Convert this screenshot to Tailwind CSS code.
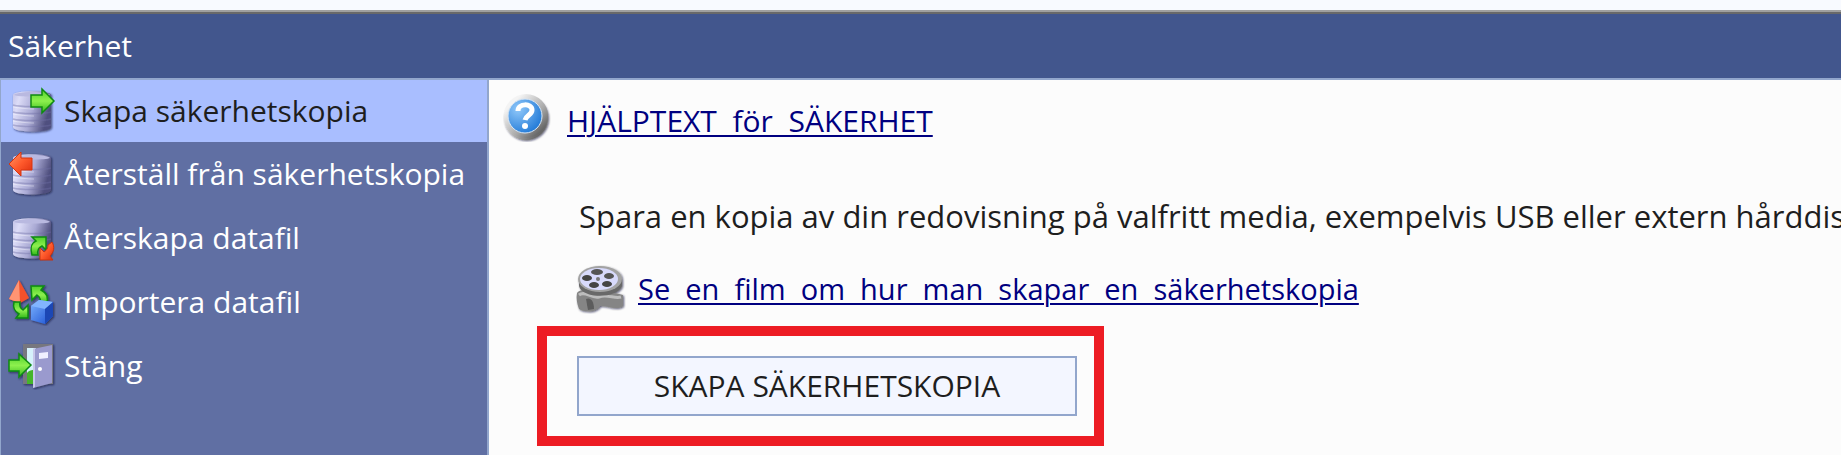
<!DOCTYPE html>
<html lang="sv">
<head>
  <meta charset="UTF-8" />
  <meta name="viewport" content="width=device-width, initial-scale=1.0"/>
  <title>Säkerhet</title>
  <script src="https://cdn.jsdelivr.net/npm/@tailwindcss/browser@4"></script>
</head>
<body class="min-h-screen flex flex-col overflow-x-hidden bg-[#fcfcfc] font-['Open_Sans','Noto_Sans',sans-serif] text-[30px] leading-10 text-[#1e1e1e]">

  <!-- shared gradients and shapes -->
  <svg class="absolute size-0" aria-hidden="true">
    <defs>
      <linearGradient id="metal" x1="0" x2="1" y1="0" y2="0.3">
        <stop offset="0" stop-color="#c4c4e8"/>
        <stop offset="0.2" stop-color="#dcdcf7"/>
        <stop offset="0.6" stop-color="#a9a9d4"/>
        <stop offset="1" stop-color="#50507f"/>
      </linearGradient>
      <linearGradient id="green" x1="0" x2="0" y1="0" y2="1">
        <stop offset="0" stop-color="#4fd02a"/>
        <stop offset="0.5" stop-color="#8df04e"/>
        <stop offset="1" stop-color="#35b91c"/>
      </linearGradient>
      <linearGradient id="red" x1="0" x2="1" y1="0" y2="1">
        <stop offset="0" stop-color="#ff9a6a"/>
        <stop offset="0.5" stop-color="#ff5a2c"/>
        <stop offset="1" stop-color="#d92a0c"/>
      </linearGradient>
      <linearGradient id="blue" x1="0" x2="1" y1="0" y2="1">
        <stop offset="0" stop-color="#7db4ff"/>
        <stop offset="1" stop-color="#1a4fd0"/>
      </linearGradient>
      <linearGradient id="steel" x1="0" x2="1" y1="0" y2="1">
        <stop offset="0.2" stop-color="#f4f4f4"/>
        <stop offset="0.6" stop-color="#a8a8a8"/>
        <stop offset="1" stop-color="#3c3c3c"/>
      </linearGradient>
      <radialGradient id="glass" cx="0.3" cy="0.3" r="0.8">
        <stop offset="0" stop-color="#90c8fa"/>
        <stop offset="1" stop-color="#1f78d6"/>
      </radialGradient>
      <filter id="shadow" x="-20%" y="-20%" width="150%" height="150%">
        <feDropShadow dx="1" dy="1" stdDeviation="1" flood-color="#101030" flood-opacity="0.7"/>
      </filter>
      <g id="db">
        <path d="M5 8 C5 3 43 3 43 8 V40 C43 46 5 46 5 40 Z" fill="url(#metal)" filter="url(#shadow)"/>
        <path d="M6 8 C9 4 39 4 42 8 C39 10 9 10 6 8 Z" fill="#b9b9e0"/>
        <path d="M5 18 C12 20 36 20 43 18 M5 25 C12 27 36 27 43 25 M5 32 C12 34 36 34 43 32 M5 38 C12 40 36 40 43 38" fill="none" stroke="#6f6fa4" stroke-opacity="0.4" stroke-width="1.5"/>
        <path d="M5 20 C10 21 20 22 26 22 M5 27 C10 28 20 29 26 29 M5 34 C10 35 20 36 26 36" fill="none" stroke="#fff" stroke-opacity="0.4"/>
      </g>
    </defs>
  </svg>

  <div class="h-3 bg-[#f8faff] border-b-2 border-[#a0a0a0]"></div>
  <header class="border-t-2 border-t-[#696969] border-b-2 border-b-[#92a6cc] bg-[#42568d] px-2 py-3 text-white">
    <h1>Säkerhet</h1>
  </header>

  <div class="flex grow">
    <nav class="w-[489px] shrink-0 border-l border-r-2 border-[#92a6cc] bg-[#606fa3] text-white">
      <a href="#" class="flex h-[62px] items-center gap-2 bg-[#a9beff] pl-[7px] text-[#1e1e1e]">
        <svg class="size-12" viewBox="0 0 48 48">
          <use href="#db"/>
          <path d="M23 8 H34 V2 L46 14 L34 26 V20 H23 Z" fill="url(#green)" stroke="#0f8a12" stroke-width="1.5"/>
        </svg>
        Skapa säkerhetskopia
      </a>
      <a href="#" class="flex h-16 items-center gap-2 pl-[7px]">
        <svg class="size-12" viewBox="0 0 48 48">
          <use href="#db"/>
          <path d="M24 8 H13 V2 L1 14 L13 26 V20 H24 Z" fill="url(#red)" stroke="#d8340f" stroke-width="1"/>
        </svg>
        Återställ från säkerhetskopia
      </a>
      <a href="#" class="flex h-16 items-center gap-2 pl-[7px]">
        <svg class="size-12" viewBox="0 0 48 48">
          <use href="#db"/>
          <path d="M24 41 C22 33 23 29 28 27 L24 23 H38 V36 L34 32 C30 34 29 37 30 41 Z" fill="url(#green)" stroke="#0f8a12" stroke-width="1.5"/>
          <path d="M44 28 C47 33 46 38 42 42 L45 46 H32 V34 L36 38 C39 36 40 34 40 31 Z" fill="url(#red)" stroke="#c8320f" stroke-width="1"/>
        </svg>
        Återskapa datafil
      </a>
      <a href="#" class="flex h-16 items-center gap-2 pl-[7px]">
        <svg class="size-12" viewBox="0 0 48 48">
          <g filter="url(#shadow)">
            <path d="M11 2 L21 20 L12 25 L1 21 Z" fill="#f4512c"/>
            <path d="M11 2 L12 25 L1 21 Z" fill="#ff9473"/>
            <path d="M23 8 H36 L33 12 C39 15 41 20 38 26 H32 C33 22 32 19 29 17 L24 22 Z" fill="url(#green)" stroke="#0f8a12" stroke-width="1.5"/>
            <path d="M6 24 H12 C11 28 12 30 15 32 L20 27 V40 H8 L11 36 C6 33 5 28 6 24 Z" fill="url(#green)" stroke="#0f8a12" stroke-width="1.5"/>
            <path d="M23 28 L31 22 L45 24 V38 L37 46 L23 42 Z" fill="url(#blue)"/>
            <path d="M23 28 L31 22 L45 24 L37 31 Z" fill="#82b5ff"/>
            <path d="M37 31 L45 24 V38 L37 46 Z" fill="#1c46b4"/>
          </g>
        </svg>
        Importera datafil
      </a>
      <a href="#" class="flex h-16 items-center gap-2 pl-[7px]">
        <svg class="size-12" viewBox="0 0 48 48">
          <g filter="url(#shadow)">
            <path d="M15 2 H45 V42 H15 Z" fill="#77777f"/>
            <path d="M19 6 H28 V42 H19 Z" fill="#d6f1fb"/>
            <path d="M19 31 C22 27 25 29 28 27 V42 H19 Z" fill="#45b52c"/>
            <path d="M25 7 L44 3 V41 L25 46 Z" fill="#9a9ace"/>
            <path d="M25 7 L27 6 V45 L25 46 Z" fill="#c8c8ea"/>
            <path d="M31 11 L40 10 V16 L31 17 Z" fill="#f0f0ff"/>
            <circle cx="32" cy="27" r="2" fill="#fff"/>
            <path d="M1 18 H11 V12 L23 23 L11 35 V29 H1 Z" fill="url(#green)" stroke="#0f8a12" stroke-width="1.5"/>
          </g>
        </svg>
        Stäng
      </a>
    </nav>

    <main class="min-w-0 grow overflow-hidden pt-3">
      <div class="flex items-center gap-4 pl-3">
        <svg class="size-[50px]" viewBox="0 0 50 50">
          <circle cx="25" cy="26" r="22" fill="url(#steel)" filter="url(#shadow)"/>
          <circle cx="25" cy="24" r="22" fill="url(#steel)"/>
          <circle cx="24" cy="24" r="17" fill="url(#glass)" stroke="#d8e6f4" stroke-width="1"/>
          <path d="M17 19 C17 11 31 11 31 18 C31 23 25 23 24 28" fill="none" stroke="#fff" stroke-width="5"/>
          <circle cx="24" cy="34" r="3" fill="#fff"/>
        </svg>
        <a href="#" class="mt-2 whitespace-pre text-[#000080] underline decoration-2 underline-offset-3">HJÄLPTEXT  för  SÄKERHET</a>
      </div>

      <p class="mt-[54px] whitespace-nowrap pl-[90px] text-[31px]">Spara en kopia av din redovisning på valfritt media, exempelvis USB eller extern hårddisk</p>

      <div class="mt-7 flex items-center gap-3 pl-[87px]">
        <svg class="size-[50px]" viewBox="0 0 50 50">
          <g filter="url(#shadow)">
            <path d="M1 29 C5 23 13 28 20 30 C29 27 39 29 47 31 V42 C40 47 31 41 24 42 C20 49 8 48 3 45 C1 40 0 34 1 29 Z" fill="#858585"/>
            <path d="M3 31 C9 26 15 35 23 33 C31 30 39 35 45 33" fill="none" stroke="#bdbdbd" stroke-width="3"/>
            <path d="M10 35 C14 33 18 36 18 45 L12 46 Z" fill="#5c5c5c"/>
            <path d="M3 15 V22 C6 35 41 35 46 22 V15 Z" fill="#696969"/>
            <ellipse cx="24" cy="15" rx="22" ry="13" fill="#a3a3a3"/>
          </g>
          <ellipse cx="23" cy="15" rx="19" ry="11" fill="#d8dafc"/>
          <ellipse cx="21" cy="8" rx="6" ry="3" fill="#555"/>
          <ellipse cx="11" cy="14" rx="5" ry="3" fill="#444"/>
          <ellipse cx="33" cy="12" rx="5" ry="3" fill="#555"/>
          <ellipse cx="18" cy="21" rx="5" ry="3" fill="#444"/>
          <ellipse cx="31" cy="20" rx="5" ry="3" fill="#444"/>
          <circle cx="22" cy="15" r="2" fill="#777"/>
        </svg>
        <a href="#" class="whitespace-pre text-[29px] text-[#000080] underline decoration-2 underline-offset-3">Se  en  film  om  hur  man  skapar  en  säkerhetskopia</a>
      </div>

      <div class="ml-12 mt-3 w-fit border-10 border-[#ed1c24] py-5 pl-[30px] pr-[17px]">
        <button type="button" class="h-[60px] w-[500px] border-2 border-[#92a6cc] bg-[#f3f6ff]">SKAPA SÄKERHETSKOPIA</button>
      </div>
    </main>
  </div>

</body>
</html>
